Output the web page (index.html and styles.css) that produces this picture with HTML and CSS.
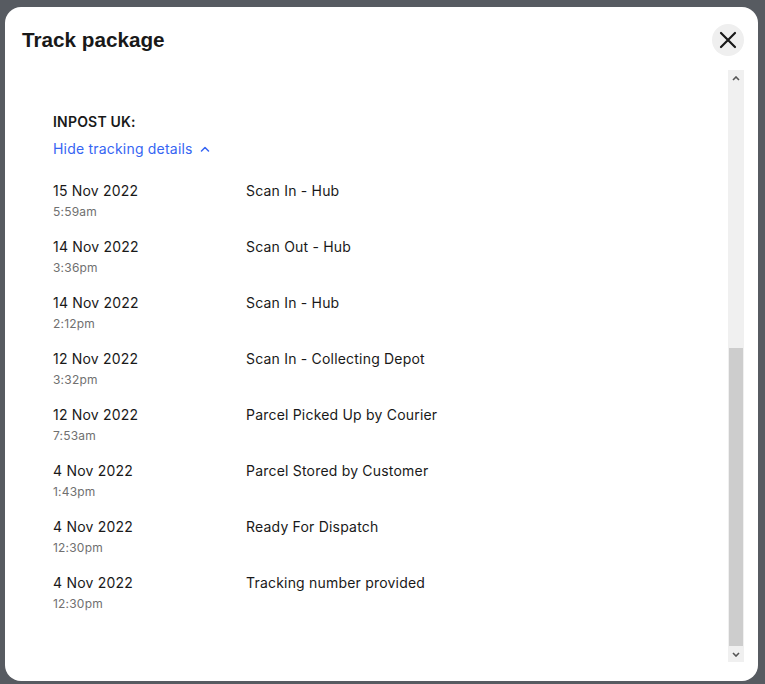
FILE: index.html
```html
<!DOCTYPE html>
<html lang="en">
<head>
    <meta charset="UTF-8">
    <meta name="viewport" content="width=device-width, initial-scale=1.0">
    <title>Track package</title>
    <link rel="stylesheet" href="styles.css">
</head>
<body>
    <div class="modal">
        <div class="modal-header">
            <h2 class="modal-title">Track package</h2>
            <button class="close-btn" aria-label="Close">
                <svg width="18" height="18" viewBox="0 0 18 18"><path d="M2 2 L16 16 M16 2 L2 16" stroke="#191919" stroke-width="2.2" stroke-linecap="round"/></svg>
            </button>
        </div>
        <div class="modal-body">
            <div class="tracking">
                <div class="carrier">INPOST UK:</div>
                <a class="toggle" href="#">Hide tracking details
                    <svg width="10" height="6" viewBox="0 0 10 6"><path d="M1.5 5 L5 1.5 L8.5 5" fill="none" stroke="#3665f3" stroke-width="1.5" stroke-linecap="round" stroke-linejoin="round"/></svg>
                </a>
                <div class="events">
                    <div class="event">
                        <div class="when"><div class="date">15 Nov 2022</div><div class="time">5:59am</div></div>
                        <div class="what">Scan In - Hub</div>
                    </div>
                    <div class="event">
                        <div class="when"><div class="date">14 Nov 2022</div><div class="time">3:36pm</div></div>
                        <div class="what">Scan Out - Hub</div>
                    </div>
                    <div class="event">
                        <div class="when"><div class="date">14 Nov 2022</div><div class="time">2:12pm</div></div>
                        <div class="what">Scan In - Hub</div>
                    </div>
                    <div class="event">
                        <div class="when"><div class="date">12 Nov 2022</div><div class="time">3:32pm</div></div>
                        <div class="what">Scan In - Collecting Depot</div>
                    </div>
                    <div class="event">
                        <div class="when"><div class="date">12 Nov 2022</div><div class="time">7:53am</div></div>
                        <div class="what">Parcel Picked Up by Courier</div>
                    </div>
                    <div class="event">
                        <div class="when"><div class="date">4 Nov 2022</div><div class="time">1:43pm</div></div>
                        <div class="what">Parcel Stored by Customer</div>
                    </div>
                    <div class="event">
                        <div class="when"><div class="date">4 Nov 2022</div><div class="time">12:30pm</div></div>
                        <div class="what">Ready For Dispatch</div>
                    </div>
                    <div class="event">
                        <div class="when"><div class="date">4 Nov 2022</div><div class="time">12:30pm</div></div>
                        <div class="what">Tracking number provided</div>
                    </div>
                </div>
            </div>
            <div class="scrollbar">
                <div class="scroll-btn">
                    <svg width="8" height="5" viewBox="0 0 8 5"><path d="M1 4 L4 1 L7 4" fill="none" stroke="#555" stroke-width="1.6"/></svg>
                </div>
                <div class="scroll-track"></div>
                <div class="scroll-thumb"></div>
                <div class="scroll-btn">
                    <svg width="8" height="5" viewBox="0 0 8 5"><path d="M1 1 L4 4 L7 1" fill="none" stroke="#555" stroke-width="1.6"/></svg>
                </div>
            </div>
        </div>
    </div>
</body>
</html>
```

FILE: styles.css
```css
* {
    box-sizing: border-box;
}
html, body {
    height: 100%;
}
body {
    margin: 0;
    padding: 7px 7px 3px 5px;
    background-color: #575b61;
    font-family: Inter, "Noto Sans", sans-serif;
    color: #191919;
    overflow: hidden;
}
.modal {
    height: 674px;
    background: white;
    border-radius: 16px;
    display: flex;
    flex-direction: column;
}
.modal-header {
    display: flex;
    align-items: center;
    justify-content: space-between;
    padding: 17px 14px 0 17px;
    margin-bottom: 14px;
}
.modal-title {
    margin: 0;
    font-family: "Liberation Sans", Arial, sans-serif;
    font-size: 20.7px;
    font-weight: bold;
    line-height: 32px;
}
.close-btn {
    width: 32px;
    height: 32px;
    border-radius: 50%;
    border: none;
    background-color: #efefef;
    display: flex;
    align-items: center;
    justify-content: center;
    padding: 0;
    cursor: pointer;
}
.modal-body {
    height: 592px;
    display: flex;
    padding-right: 14px;
}
.tracking {
    flex: 1;
    padding: 42px 0 0 48px;
    font-size: 14px;
    line-height: 20px;
    letter-spacing: 0.2px;
}
.carrier {
    font-weight: 600;
}
.toggle {
    display: inline-flex;
    align-items: center;
    gap: 7px;
    margin-top: 7px;
    color: #3665f3;
    text-decoration: none;
}
.events {
    margin-top: 22px;
    display: flex;
    flex-direction: column;
    gap: 14px;
}
.event {
    display: flex;
}
.when {
    width: 193px;
}
.time {
    font-size: 12px;
    line-height: 22px;
    color: #707070;
}
.scrollbar {
    width: 16px;
    display: flex;
    flex-direction: column;
    background-color: #f0f0f0;
}
.scroll-btn {
    height: 16px;
    display: flex;
    align-items: center;
    justify-content: center;
}
.scroll-track {
    flex: 1;
}
.scroll-thumb {
    height: 298px;
    margin: 0 1px;
    background-color: #cdcdcd;
}
```
